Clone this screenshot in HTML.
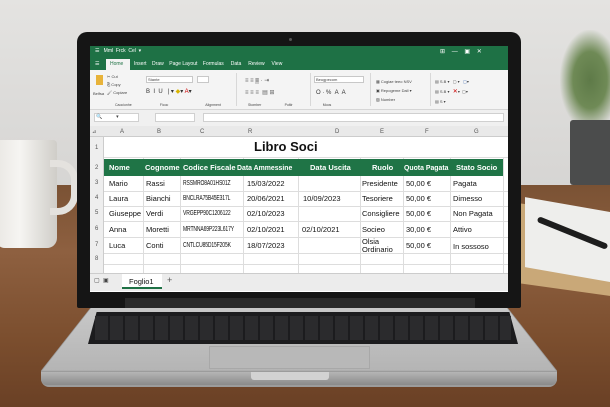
<!DOCTYPE html>
<html><head><meta charset="utf-8"><style>
*{margin:0;padding:0;box-sizing:border-box}
body{width:610px;height:407px;overflow:hidden;position:relative;font-family:"Liberation Sans",sans-serif;background:#d9d8d6}
.a{position:absolute}
.t{position:absolute;font-size:7.5px;color:#111;white-space:nowrap;line-height:1}
.c{position:absolute;font-size:7px;color:#111;white-space:nowrap;line-height:1;transform:scaleX(.72);transform-origin:0 0;letter-spacing:-.2px}
.h{position:absolute;font-size:7.5px;color:#fff;font-weight:bold;white-space:nowrap;line-height:1}
.s{position:absolute;font-size:4px;color:#444;white-space:nowrap;line-height:1}
</style></head><body>
<div class="a" style="left:0;top:0;width:610px;height:200px;background:linear-gradient(180deg,#e4e3e1,#d5d4d2)"></div>
<div class="a" style="left:0;top:185px;width:610px;height:222px;background:linear-gradient(180deg,#7a5234 0%,#8e6040 30%,#7b4e2e 70%,#6a4025 100%)"></div>
<div class="a" style="left:-5px;top:140px;width:62px;height:108px;background:linear-gradient(90deg,#e9e7e3,#f6f5f2 40%,#cfcdc8);border-radius:4px 4px 10px 10px"></div>
<div class="a" style="left:50px;top:160px;width:28px;height:55px;border:7px solid #e4e2de;border-left:none;border-radius:0 20px 20px 0"></div>
<div class="a" style="left:560px;top:30px;width:60px;height:100px;background:radial-gradient(ellipse at 50% 50%,#5e7a48,#6f8a56 40%,rgba(150,160,140,0) 72%)"></div>
<div class="a" style="left:570px;top:120px;width:45px;height:65px;background:#4b4c4c;border-radius:3px"></div>
<div class="a" style="left:520px;top:210px;width:95px;height:80px;background:#c9a878;transform:skewY(8deg)"></div>
<div class="a" style="left:525px;top:205px;width:90px;height:70px;background:#eeeeec;transform:skewY(10deg)"></div>
<div class="a" style="left:535px;top:230px;width:75px;height:6px;background:#1d1d1d;transform:rotate(22deg);border-radius:3px"></div>
<div class="a" style="left:41px;top:305px;width:516px;height:82px;background:#9c9c9c;clip-path:polygon(10% 0,90% 0,100% 80%,100% 100%,0 100%,0 80%);border-radius:0 0 8px 8px"></div>
<div class="a" style="left:42px;top:305px;width:514px;height:70px;background:linear-gradient(180deg,#c9c9c9,#b3b3b3);clip-path:polygon(10% 0,90% 0,100% 94%,0 94%)"></div>
<div class="a" style="left:41px;top:372px;width:516px;height:13px;background:linear-gradient(180deg,#b5b5b5,#8a8a8a);border-radius:0 0 6px 6px"></div>
<div class="a" style="left:251px;top:372px;width:78px;height:8px;background:#d2d2d2;border-radius:0 0 3px 3px"></div>
<div class="a" style="left:88px;top:312px;width:430px;height:32px;background:#1c1c1e;clip-path:polygon(2% 0,98% 0,100% 100%,0 100%)"></div>
<div class="a" style="left:95px;top:316px;width:416px;height:24px;background:repeating-linear-gradient(90deg,#2b2b2d 0 13px,#1c1c1e 13px 15px)"></div>
<div class="a" style="left:209px;top:346px;width:161px;height:23px;background:#b8b8b8;border:1px solid #a8a8a8"></div>
<div class="a" style="left:77px;top:32px;width:444px;height:276px;background:#151515;border-radius:10px 10px 2px 2px"></div>
<div class="a" style="left:125px;top:298px;width:350px;height:10px;background:#2a2a2a"></div>
<div class="a" style="left:289px;top:38px;width:3px;height:3px;background:#555;border-radius:50%"></div>
<div class="a" style="left:90px;top:46px;width:418px;height:246px;background:#fff"></div>
<div class="a" style="left:90px;top:46px;width:418px;height:24px;background:#1e7145"></div>
<div class="t" style="left:95px;top:49px;color:#fff;font-size:5px">☰ &nbsp; Mml &nbsp;Frck &nbsp;Cel &nbsp;▾</div>
<div class="t" style="left:440px;top:49px;color:#fff;font-size:6px">⊞ &nbsp;&nbsp; — &nbsp;&nbsp; ▣ &nbsp;&nbsp; ✕</div>
<div class="a" style="left:106px;top:59px;width:24px;height:11px;background:#f3f3f3"></div>
<div class="t" style="left:95px;top:62px;color:#fff;font-size:5px">☰</div>
<div class="t" style="left:110px;top:62px;color:#217346;font-size:5px">Home</div>
<div class="t" style="left:134px;top:62px;color:#fff;font-size:5px">Insert &nbsp;&nbsp;&nbsp;Draw &nbsp;&nbsp;&nbsp;Page Layout &nbsp;&nbsp;&nbsp;Formulas &nbsp;&nbsp;&nbsp;&nbsp;Data &nbsp;&nbsp;&nbsp;&nbsp;Review &nbsp;&nbsp;&nbsp;&nbsp;View</div>
<div class="a" style="left:90px;top:70px;width:418px;height:40px;background:#f4f4f4;border-bottom:1px solid #d6d6d6"></div>
<div class="a" style="left:96px;top:75px;width:7px;height:10px;background:#e8b33a"></div>
<div class="s" style="left:107px;top:75px">✂ Cut<br><br>⎘ Copy<br><br>🖌 Copiare</div>
<div class="s" style="left:93px;top:92px">Belfsa</div>
<div class="a" style="left:146px;top:76px;width:47px;height:7px;background:#fff;border:1px solid #c8c8c8"></div>
<div class="s" style="left:148px;top:78px">Stante</div>
<div class="a" style="left:197px;top:76px;width:12px;height:7px;background:#fff;border:1px solid #c8c8c8"></div>
<div class="t" style="left:146px;top:89px;font-size:6px;color:#333">B &nbsp;I &nbsp;U &nbsp;&nbsp;| ▾ <span style="color:#d8b400">◆</span>▾ <span style="color:#c00">A</span>▾</div>
<div class="a" style="left:236px;top:73px;width:1px;height:33px;background:#d8d8d8"></div>
<div class="t" style="left:245px;top:78px;font-size:6px;color:#666">≡ ≡ <span style="background:#ccc">≡</span> · ⇥</div>
<div class="t" style="left:245px;top:90px;font-size:6px;color:#666">≡ ≡ ≡ &nbsp;▤ ⊞</div>
<div class="a" style="left:310px;top:73px;width:1px;height:33px;background:#d8d8d8"></div>
<div class="a" style="left:314px;top:76px;width:50px;height:7px;background:#fff;border:1px solid #c8c8c8"></div>
<div class="s" style="left:316px;top:78px">Beugpecom</div>
<div class="t" style="left:316px;top:90px;font-size:6px;color:#333">O · % &nbsp;A &nbsp;A</div>
<div class="a" style="left:370px;top:73px;width:1px;height:33px;background:#d8d8d8"></div>
<div class="s" style="left:376px;top:77px;line-height:9px">▦ Cogiae teeo NSV<br>▣ Repogeme Dall ▾<br>▨ Number</div>
<div class="a" style="left:430px;top:73px;width:1px;height:33px;background:#d8d8d8"></div>
<div class="s" style="left:435px;top:77px;line-height:10px">▤ S.B ▾ &nbsp;&nbsp;▢ ▾ &nbsp;&nbsp;<span style="color:#2a5aa8">▢</span>▾<br>▤ S.B ▾ &nbsp;&nbsp;<span style="color:#c00;font-size:6px">✕</span>▾ &nbsp;▢▾<br>▤ S ▾</div>
<div class="s" style="left:115px;top:104px;font-size:3.5px">Caocionhe &nbsp;&nbsp;&nbsp;&nbsp;&nbsp;&nbsp;&nbsp;&nbsp;&nbsp;&nbsp;&nbsp;&nbsp;&nbsp;&nbsp;&nbsp;&nbsp;&nbsp;&nbsp;&nbsp;&nbsp;&nbsp;&nbsp;&nbsp;&nbsp;&nbsp;&nbsp;&nbsp;&nbsp;Ficoc &nbsp;&nbsp;&nbsp;&nbsp;&nbsp;&nbsp;&nbsp;&nbsp;&nbsp;&nbsp;&nbsp;&nbsp;&nbsp;&nbsp;&nbsp;&nbsp;&nbsp;&nbsp;&nbsp;&nbsp;&nbsp;&nbsp;&nbsp;&nbsp;&nbsp;&nbsp;&nbsp;&nbsp;&nbsp;&nbsp;&nbsp;&nbsp;&nbsp;&nbsp;&nbsp;&nbsp;&nbsp;Alignment &nbsp;&nbsp;&nbsp;&nbsp;&nbsp;&nbsp;&nbsp;&nbsp;&nbsp;&nbsp;&nbsp;&nbsp;&nbsp;&nbsp;&nbsp;&nbsp;&nbsp;&nbsp;&nbsp;&nbsp;&nbsp;&nbsp;&nbsp;&nbsp;&nbsp;&nbsp;&nbsp;Stomber &nbsp;&nbsp;&nbsp;&nbsp;&nbsp;&nbsp;&nbsp;&nbsp;&nbsp;&nbsp;&nbsp;&nbsp;&nbsp;&nbsp;&nbsp;&nbsp;&nbsp;&nbsp;&nbsp;&nbsp;&nbsp;&nbsp;&nbsp;Poltir &nbsp;&nbsp;&nbsp;&nbsp;&nbsp;&nbsp;&nbsp;&nbsp;&nbsp;&nbsp;&nbsp;&nbsp;&nbsp;&nbsp;&nbsp;&nbsp;&nbsp;&nbsp;&nbsp;&nbsp;&nbsp;&nbsp;&nbsp;&nbsp;&nbsp;&nbsp;&nbsp;&nbsp;&nbsp;&nbsp;Moos</div>
<div class="a" style="left:90px;top:110px;width:418px;height:16px;background:#f0f0f0"></div>
<div class="a" style="left:94px;top:113px;width:45px;height:9px;background:#fff;border:1px solid #d0d0d0"></div>
<div class="s" style="left:96px;top:115px;font-size:5px">🔍 &nbsp;&nbsp;&nbsp;&nbsp;&nbsp;&nbsp;&nbsp;&nbsp;&nbsp;▾</div>
<div class="a" style="left:155px;top:113px;width:40px;height:9px;background:#fff;border:1px solid #d0d0d0"></div>
<div class="a" style="left:203px;top:113px;width:301px;height:9px;background:#fff;border:1px solid #d0d0d0"></div>
<div class="a" style="left:90px;top:126px;width:418px;height:11px;background:#e9e9e9;border-bottom:1px solid #ccc"></div>
<div class="s" style="left:92px;top:130px;font-size:5px">⊿</div>
<div class="t" style="left:120px;top:129px;font-size:6px;color:#555">A</div>
<div class="t" style="left:157px;top:129px;font-size:6px;color:#555">B</div>
<div class="t" style="left:200px;top:129px;font-size:6px;color:#555">C</div>
<div class="t" style="left:248px;top:129px;font-size:6px;color:#555">R</div>
<div class="t" style="left:335px;top:129px;font-size:6px;color:#555">D</div>
<div class="t" style="left:380px;top:129px;font-size:6px;color:#555">E</div>
<div class="t" style="left:425px;top:129px;font-size:6px;color:#555">F</div>
<div class="t" style="left:474px;top:129px;font-size:6px;color:#555">G</div>
<div class="a" style="left:90px;top:137px;width:14px;height:137px;background:#eee;border-right:1px solid #ccc"></div>
<div class="t" style="left:95px;top:145px;font-size:6px;color:#555">1</div>
<div class="t" style="left:95px;top:165px;font-size:6px;color:#555">2</div>
<div class="t" style="left:95px;top:180px;font-size:6px;color:#555">3</div>
<div class="t" style="left:95px;top:195px;font-size:6px;color:#555">4</div>
<div class="t" style="left:95px;top:210px;font-size:6px;color:#555">5</div>
<div class="t" style="left:95px;top:226px;font-size:6px;color:#555">6</div>
<div class="t" style="left:95px;top:242px;font-size:6px;color:#555">7</div>
<div class="t" style="left:95px;top:256px;font-size:6px;color:#555">8</div>
<div class="a" style="left:104px;top:137px;width:404px;height:137px;background:
linear-gradient(#ddd,#ddd) 0 20px/100% 1px no-repeat,
linear-gradient(#ddd,#ddd) 0 54px/100% 1px no-repeat,
linear-gradient(#ddd,#ddd) 0 69px/100% 1px no-repeat,
linear-gradient(#ddd,#ddd) 0 84px/100% 1px no-repeat,
linear-gradient(#ddd,#ddd) 0 100px/100% 1px no-repeat,
linear-gradient(#ddd,#ddd) 0 116px/100% 1px no-repeat,
linear-gradient(#ddd,#ddd) 0 127px/100% 1px no-repeat,
linear-gradient(#ddd,#ddd) 39px 20px/1px 100% no-repeat,
linear-gradient(#ddd,#ddd) 76px 20px/1px 100% no-repeat,
linear-gradient(#ddd,#ddd) 139px 20px/1px 100% no-repeat,
linear-gradient(#ddd,#ddd) 194px 20px/1px 100% no-repeat,
linear-gradient(#ddd,#ddd) 256px 20px/1px 100% no-repeat,
linear-gradient(#ddd,#ddd) 299px 20px/1px 100% no-repeat,
linear-gradient(#ddd,#ddd) 346px 20px/1px 100% no-repeat,
linear-gradient(#ddd,#ddd) 399px 20px/1px 100% no-repeat"></div>
<div class="t" style="left:254px;top:140px;font-size:13px;color:#111;font-weight:bold">Libro Soci</div>
<div class="a" style="left:104px;top:159px;width:399px;height:17px;background:#1f7446"></div>
<div class="h" style="left:109px;top:164px">Nome</div>
<div class="h" style="left:145px;top:164px">Cognome</div>
<div class="h" style="left:183px;top:164px">Codice Fiscale</div>
<div class="h" style="left:237px;top:164px;transform:scaleX(.92);transform-origin:0 0">Data Ammessine</div>
<div class="h" style="left:310px;top:164px">Data Uscita</div>
<div class="h" style="left:372px;top:164px">Ruolo</div>
<div class="h" style="left:404px;top:164px;transform:scaleX(.92);transform-origin:0 0">Quota Pagata</div>
<div class="h" style="left:456px;top:164px">Stato Socio</div>
<div class="t" style="left:109px;top:180px">Mario</div><div class="t" style="left:146px;top:180px">Rassi</div><div class="c" style="left:183px;top:180px">RSSMRO8A01HS01Z</div><div class="t" style="left:247px;top:180px">15/03/2022</div><div class="t" style="left:362px;top:180px">Presidente</div><div class="t" style="left:406px;top:180px">50,00 €</div><div class="t" style="left:453px;top:180px">Pagata</div>
<div class="t" style="left:109px;top:195px">Laura</div><div class="t" style="left:146px;top:195px">Bianchi</div><div class="c" style="left:183px;top:195px">BNCLRA75B45E317L</div><div class="t" style="left:247px;top:195px">20/06/2021</div><div class="t" style="left:303px;top:195px">10/09/2023</div><div class="t" style="left:362px;top:195px">Tesoriere</div><div class="t" style="left:406px;top:195px">50,00 €</div><div class="t" style="left:453px;top:195px">Dimesso</div>
<div class="t" style="left:109px;top:210px">Giuseppe</div><div class="t" style="left:146px;top:210px">Verdi</div><div class="c" style="left:183px;top:210px">VRGEPP90C1206122</div><div class="t" style="left:247px;top:210px">02/10/2023</div><div class="t" style="left:362px;top:210px">Consigliere</div><div class="t" style="left:406px;top:210px">50,00 €</div><div class="t" style="left:453px;top:210px">Non Pagata</div>
<div class="t" style="left:109px;top:226px">Anna</div><div class="t" style="left:146px;top:226px">Moretti</div><div class="c" style="left:183px;top:226px">MRTNNA69P223L617Y</div><div class="t" style="left:247px;top:226px">02/10/2021</div><div class="t" style="left:302px;top:226px">02/10/2021</div><div class="t" style="left:362px;top:226px">Socieo</div><div class="t" style="left:406px;top:226px">30,00 €</div><div class="t" style="left:453px;top:226px">Attivo</div>
<div class="t" style="left:109px;top:242px">Luca</div><div class="t" style="left:146px;top:242px">Conti</div><div class="c" style="left:183px;top:242px">CNTLCU85D15F205K</div><div class="t" style="left:247px;top:242px">18/07/2023</div><div class="t" style="left:362px;top:238px;line-height:8px">Olsia<br>Ordinario</div><div class="t" style="left:406px;top:242px">50,00 €</div><div class="t" style="left:453px;top:243px">In sossoso</div>
<div class="a" style="left:90px;top:273px;width:418px;height:18px;background:#ececec;border-top:1px solid #ccc"></div>
<div class="s" style="left:94px;top:278px;font-size:6px">▢ &nbsp;▣</div>
<div class="a" style="left:122px;top:274px;width:40px;height:15px;background:#fff;border-bottom:2px solid #1e7145"></div>
<div class="t" style="left:129px;top:278px;font-size:7.5px">Foglio1</div>
<div class="t" style="left:167px;top:276px;font-size:9px;color:#555">+</div>
</body></html>
